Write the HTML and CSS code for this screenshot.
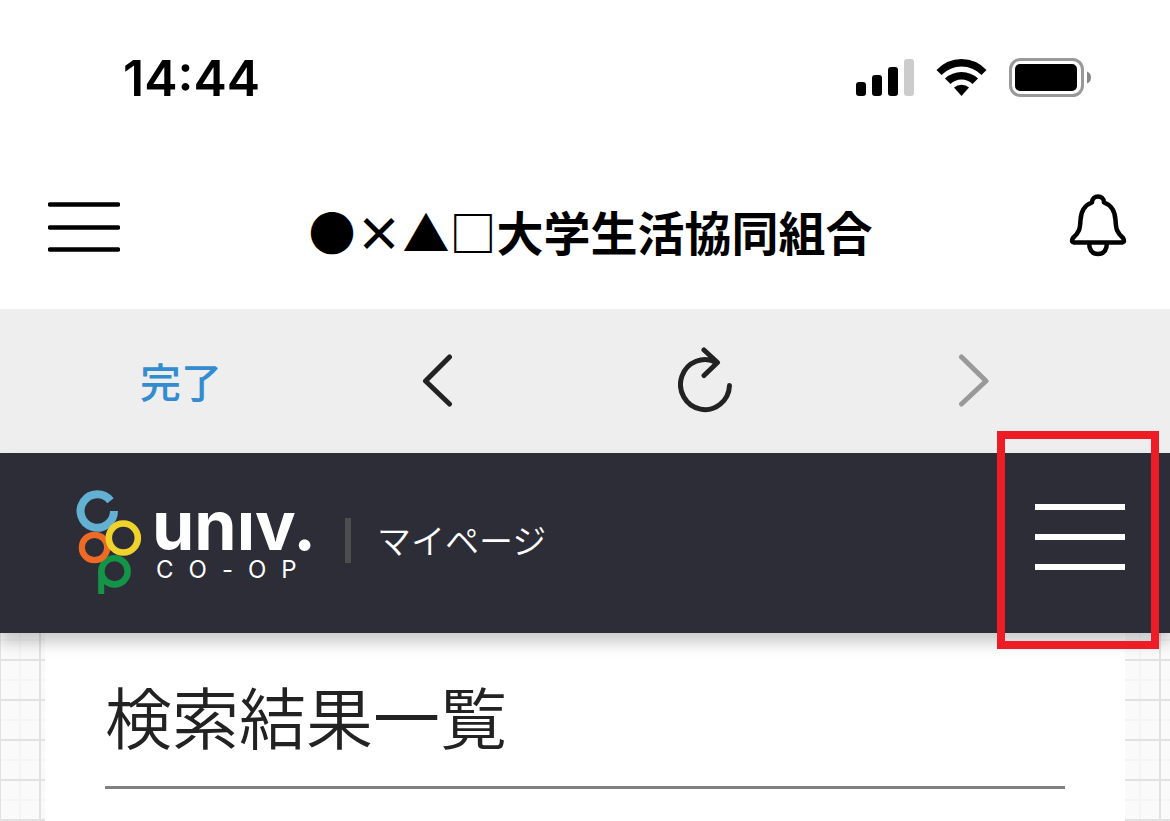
FILE: index.html
```
<!DOCTYPE html>
<html lang="ja">
<head>
  <meta charset="UTF-8">
  <meta name="viewport" content="width=device-width, initial-scale=1.0">
  <title>検索結果一覧 | マイページ</title>
  <link rel="stylesheet" href="styles.css">
</head>
<body>
  <div class="status-bar">
    <time class="clock">14:44</time>
    <div class="status-icons">
      <svg width="58" height="40" viewBox="0 0 58 40" aria-hidden="true">
        <rect x="0" y="24" width="10" height="14" rx="3"/>
        <rect x="16" y="17" width="10" height="21" rx="3"/>
        <rect x="32" y="9" width="10" height="29" rx="3"/>
        <rect x="48" y="1" width="10" height="37" rx="3" fill="#ccc"/>
      </svg>
      <svg width="51" height="40" viewBox="0 0 51 40" aria-hidden="true">
        <path d="M0.5 12Q11 1 25.5 1T50.5 12L45.500 17Q37 8.500 25.500 8.500T5.500 17Z"/>
        <path d="M9 20.500Q16 14 25.500 14T42 20.500L36.500 26Q32 21.500 25.500 21.500T14.500 26Z"/>
        <path d="M18 29.500Q21 26.800 25.500 26.800T33 29.500L25.500 38Z"/>
      </svg>
      <svg width="83" height="40" viewBox="0 0 83 40" aria-hidden="true">
        <rect x="1.500" y="1.500" width="72" height="36" rx="10" fill="none" stroke="#999" stroke-width="3"/>
        <rect x="6" y="6" width="62" height="27" rx="5"/>
        <path d="M78 13.500Q82 15 82 19.500T78 25.500Z" fill="#888"/>
      </svg>
    </div>
  </div>

  <header class="app-header">
    <button type="button" class="icon-btn" aria-label="メニュー">
      <svg width="72" height="50" viewBox="0 0 72 50">
        <path d="M2 2.500H70M2 25.500H70M2 47.500H70" fill="none" stroke="#000" stroke-width="4.500" stroke-linecap="round"/>
      </svg>
    </button>
    <h1 class="app-title">●×▲□大学生活協同組合</h1>
    <button type="button" class="icon-btn bell" aria-label="お知らせ">
      <svg width="58" height="64" viewBox="0 0 58 64">
        <g fill="none" stroke="#000" stroke-width="4.500" stroke-linejoin="round">
          <path d="M23 9.500C23 1.500 35 1.500 35 9.500C42 12 46 18 46.500 27C47 36 47.500 39 54 45Q56.500 49 53 49.500H5Q1.500 49 4 45C10.500 39 11 36 11.500 27C12 18 16 12 23 9.500Z"/>
          <path d="M20 50Q20.500 61 29 61T38 50"/>
        </g>
      </svg>
    </button>
  </header>

  <nav class="toolbar">
    <button type="button" class="done-btn">完了</button>
    <button type="button" class="icon-btn" aria-label="戻る">
      <svg width="32" height="64" viewBox="0 0 32 64">
        <path d="M27.500 9L3.500 33L27.500 56" fill="none" stroke="#222" stroke-width="5" stroke-linecap="round" stroke-linejoin="round"/>
      </svg>
    </button>
    <button type="button" class="icon-btn" aria-label="再読み込み">
      <svg width="56" height="66" viewBox="0 0 56 66">
        <path d="M51.500 38.500A24.500 25 0 1 1 38.500 15.500M26 3L39.500 15.500L26 28.500" fill="none" stroke="#222" stroke-width="5" stroke-linecap="round" stroke-linejoin="round"/>
      </svg>
    </button>
    <button type="button" class="icon-btn" aria-label="進む" disabled>
      <svg width="32" height="64" viewBox="0 0 32 64">
        <path d="M3.500 9L28 33L3.500 56" fill="none" stroke="#999" stroke-width="5" stroke-linecap="round" stroke-linejoin="round"/>
      </svg>
    </button>
  </nav>

  <header class="site-header">
    <a href="#" class="brand">
      <svg class="brand-mark" width="66" height="106" viewBox="0 0 66 106" aria-hidden="true">
        <g fill="none">
          <path d="M25.200 104V81.300" stroke="#149447" stroke-width="6"/>
          <circle cx="38.500" cy="81.300" r="13.200" stroke="#149447" stroke-width="6.400"/>
          <circle cx="18.500" cy="57.500" r="12.700" stroke="#ee6b25" stroke-width="6.200"/>
          <path d="M34.500 10.800A16.700 16.700 0 1 0 38 21" stroke="#62b0d2" stroke-width="8"/>
          <circle cx="47.300" cy="48" r="14.500" stroke="#f0d22d" stroke-width="6.600"/>
        </g>
      </svg>
      <span class="brand-text">
        <span class="brand-univ">unıv.</span>
        <span class="brand-coop">CO-OP</span>
      </span>
    </a>
    <span class="site-name">マイページ</span>
    <button type="button" class="menu-btn" aria-label="メニューを開く">
      <span></span>
      <span></span>
      <span></span>
    </button>
    <div class="highlight"></div>
  </header>

  <main class="page">
    <section class="card">
      <h2 class="card-title">検索結果一覧</h2>
    </section>
  </main>
</body>
</html>
```

FILE: styles.css
```
* {
  box-sizing: border-box;
}

body {
  margin: 0;
  min-height: 100vh;
  display: flex;
  flex-direction: column;
  background: #fff;
  color: #222;
  font-family: "Noto Sans CJK JP", sans-serif;
}

h1,
h2 {
  margin: 0;
}

svg {
  display: block;
}

button {
  border: 0;
  padding: 0;
  background: none;
  font-family: inherit;
  cursor: pointer;
}

/* status bar */
.status-bar {
  display: flex;
  justify-content: space-between;
  align-items: center;
  height: 156px;
  padding: 0 78px 0 123px;
}

.clock {
  color: #000;
  font-family: Inter, sans-serif;
  font-size: 50px;
  font-weight: 600;
  line-height: 60px;
}

.status-icons {
  display: flex;
  gap: 22px;
}

/* app header */
.app-header {
  display: grid;
  grid-template-columns: 72px 1fr 66px;
  align-items: center;
  height: 153px;
  padding: 0 43px 12px 48px;
}

.app-title {
  padding-top: 8px;
  color: #000;
  font-size: 47px;
  font-weight: 700;
  line-height: 60px;
  text-align: center;
  white-space: nowrap;
}

.bell {
  justify-self: end;
  padding-bottom: 4px;
}

/* browser toolbar */
.toolbar {
  display: grid;
  grid-template-columns: repeat(4, 1fr);
  align-items: center;
  justify-items: center;
  height: 144px;
  padding: 0 62px 2px 36px;
  background: #eee;
}

.done-btn {
  padding-left: 22px;
  color: #338ccf;
  font-size: 41px;
  font-weight: 500;
  line-height: 60px;
}

/* site header */
.site-header {
  position: relative;
  z-index: 1;
  display: flex;
  align-items: center;
  height: 180px;
  padding: 0 45px 0 76px;
  background: #2d2d38;
  box-shadow: 0 10px 14px rgba(0, 0, 0, 0.2);
  color: #fff;
}

.brand {
  display: flex;
  align-items: center;
  gap: 10px;
  color: #fff;
  font-family: Inter, sans-serif;
  text-decoration: none;
}

.brand-text {
  display: flex;
  flex-direction: column;
  width: 164px;
}

.brand-univ {
  font-size: 68px;
  font-weight: 700;
  line-height: 54px;
}

.brand-coop {
  padding-left: 4px;
  font-size: 24px;
  letter-spacing: 15px;
  line-height: 36px;
}

.site-name {
  display: flex;
  align-items: center;
  gap: 26px;
  margin-left: 29px;
  padding-bottom: 6px;
  font-size: 34px;
  font-weight: 350;
  line-height: 42px;
}

.site-name::before {
  content: "";
  width: 6px;
  height: 45px;
  background: #4d4d4d;
}

.menu-btn {
  display: flex;
  flex-direction: column;
  gap: 24px;
  width: 90px;
  margin-left: auto;
  padding-bottom: 12px;
}

.menu-btn span {
  height: 6px;
  background: #fff;
}

.highlight {
  position: absolute;
  top: -22px;
  right: 11px;
  bottom: -16px;
  width: 162px;
  border: 8px solid #ee1c24;
  pointer-events: none;
}

/* page */
.page {
  flex: 1;
  display: flex;
  padding: 0 45px;
  background-color: #fafafa;
  background-image:
    linear-gradient(#e2e2e2 2px, transparent 2px),
    linear-gradient(90deg, #e2e2e2 2px, transparent 2px),
    linear-gradient(#f2f4f6 2px, transparent 2px),
    linear-gradient(90deg, #f2f4f6 2px, transparent 2px);
  background-position: 0 26px, -1px 0, 0 6px, 19px 0;
  background-size: 40px 40px;
}

.card {
  flex: 1;
  padding: 41px 60px 0;
  background: #fff;
}

.card-title {
  padding-bottom: 30px;
  border-bottom: 3px solid #808080;
  font-size: 67px;
  font-weight: 350;
  line-height: 82px;
}
```
